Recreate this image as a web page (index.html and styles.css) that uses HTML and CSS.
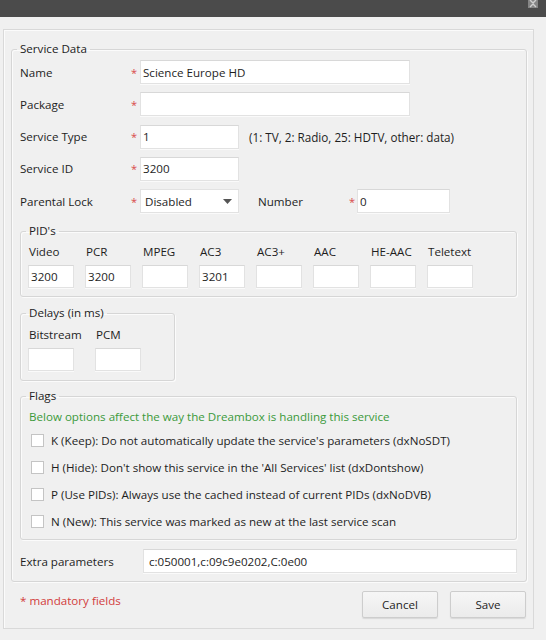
FILE: index.html
```html
<!DOCTYPE html>
<html lang="en">
<head>
    <meta charset="UTF-8">
    <title>Edit Service</title>
    <link rel="stylesheet" href="styles.css">
</head>
<body>
<div class="titlebar">
    <span class="close"><svg width="10" height="8" viewBox="0 0 10 8"><path d="M2 0l3 3 3-3M2 7l3-3 3 3" stroke="#cfcfcf" stroke-width="1.4" fill="none"/></svg></span>
</div>
<div class="window">
    <div class="frame">
        <fieldset class="group main">
            <legend>Service Data</legend>
            <div class="form">
                <div class="row">
                    <label class="lbl">Name</label><span class="req">*</span>
                    <input class="field w-long" value="Science Europe HD">
                </div>
                <div class="row">
                    <label class="lbl">Package</label><span class="req">*</span>
                    <input class="field w-long" value="">
                </div>
                <div class="row">
                    <label class="lbl">Service Type</label><span class="req">*</span>
                    <input class="field w-short" value="1">
                    <span class="hint">(1: TV, 2: Radio, 25: HDTV, other: data)</span>
                </div>
                <div class="row">
                    <label class="lbl">Service ID</label><span class="req">*</span>
                    <input class="field w-short" value="3200">
                </div>
                <div class="row">
                    <label class="lbl">Parental Lock</label><span class="req">*</span>
                    <div class="select w-short">
                        <span>Disabled</span>
                        <svg width="9" height="5" viewBox="0 0 9 5"><path d="M0 0h9L4.5 5z" fill="#555"/></svg>
                    </div>
                    <label class="lbl lbl-num">Number</label><span class="req req-num">*</span>
                    <input class="field w-num" value="0">
                </div>
            </div>

            <fieldset class="group pids">
                <legend>PID's</legend>
                <div class="cols">
                    <div class="col"><span>Video</span><input class="field box" value="3200"></div>
                    <div class="col"><span>PCR</span><input class="field box" value="3200"></div>
                    <div class="col"><span>MPEG</span><input class="field box" value=""></div>
                    <div class="col"><span>AC3</span><input class="field box" value="3201"></div>
                    <div class="col"><span>AC3+</span><input class="field box" value=""></div>
                    <div class="col"><span>AAC</span><input class="field box" value=""></div>
                    <div class="col"><span>HE-AAC</span><input class="field box" value=""></div>
                    <div class="col"><span>Teletext</span><input class="field box" value=""></div>
                </div>
            </fieldset>

            <fieldset class="group delays">
                <legend>Delays (in ms)</legend>
                <div class="cols cols-delay">
                    <div class="col"><span>Bitstream</span><input class="field box" value=""></div>
                    <div class="col"><span>PCM</span><input class="field box" value=""></div>
                </div>
            </fieldset>

            <fieldset class="group flags">
                <legend>Flags</legend>
                <div class="note">Below options affect the way the Dreambox is handling this service</div>
                <label class="flag"><input type="checkbox"> K (Keep): Do not automatically update the service's parameters (dxNoSDT)</label>
                <label class="flag"><input type="checkbox"> H (Hide): Don't show this service in the 'All Services' list (dxDontshow)</label>
                <label class="flag"><input type="checkbox"> P (Use PIDs): Always use the cached instead of current PIDs (dxNoDVB)</label>
                <label class="flag"><input type="checkbox"> N (New): This service was marked as new at the last service scan</label>
            </fieldset>

            <div class="row extra">
                <label class="lbl lbl-extra">Extra parameters</label>
                <input class="field w-extra" value="c:050001,c:09c9e0202,C:0e00">
            </div>
        </fieldset>

        <div class="footer">
            <span class="mandatory">* mandatory fields</span>
            <div class="buttons">
                <button class="btn">Cancel</button>
                <button class="btn">Save</button>
            </div>
        </div>
    </div>
</div>
</body>
</html>
```

FILE: styles.css
```css
* {
    box-sizing: border-box;
}
body {
    margin: 0;
    width: 546px;
    height: 640px;
    overflow: hidden;
    background: #f0f0f0;
    font-family: "Open Sans", "Noto Sans", sans-serif;
    font-size: 11.6px;
    color: #1e1e1e;
}
.titlebar {
    height: 17px;
    background: #4b4b4b;
    position: relative;
}
.close {
    position: absolute;
    right: 8px;
    top: 0;
    width: 10px;
    height: 8px;
    background: #858585;
    display: flex;
}
.window {
    padding: 12px 0 0 3px;
}
.frame {
    width: 531px;
    height: 600px;
    border: 1px solid #d9d9d9;
    box-shadow: inset 1px 1px 0 #fbfbfb;
    padding: 11px 6px 0 7px;
}

/* group boxes */
.group {
    margin: 0;
    min-width: 0;
    border: 1px solid #d6d6d6;
    border-radius: 3px;
    box-shadow: 1px 1px 0 #fbfbfb, inset 1px 1px 0 #fbfbfb;
    padding: 0 8px;
}
.group legend {
    padding: 0 3px;
    margin-left: -3px;
    line-height: 16px;
    color: #222;
}
.main {
    width: 516px;
    padding: 0 9px 8px 8px;
}
.form {
    padding-top: 3px;
    display: flex;
    flex-direction: column;
    gap: 8.25px;
}
.row {
    display: flex;
    align-items: center;
    height: 24px;
}
.lbl {
    width: 111px;
}
.req {
    width: 9px;
    color: #d94a4a;
    font-size: 11px;
}
.lbl-num {
    width: 91px;
    margin-left: 19px;
}
.req-num {
    width: 8px;
}
.field {
    height: 24px;
    border: 1px solid #e2e2e2;
    border-top-color: #d8d8d8;
    box-shadow: 0 1px 0 #fafafa;
    background: #fff;
    font: inherit;
    color: #1e1e1e;
    padding: 0 2px;
    outline: none;
}
.w-long {
    width: 270px;
}
.w-short {
    width: 99px;
}
.w-num {
    width: 93px;
}
.w-extra {
    width: 374px;
    margin-left: 2px;
    padding-left: 5px;
}
.hint {
    margin-left: 10px;
    font-size: 11.7px;
}
.select {
    height: 24px;
    display: flex;
    align-items: center;
    justify-content: space-between;
    padding: 0 6px 0 4px;
    background: #fff;
    border: 1px solid #e2e2e2;
    box-shadow: 0 1px 0 #fafafa;
}

/* PID's and delays */
.pids {
    margin-top: 10px;
    width: 497px;
    padding-bottom: 8px;
}
.cols {
    display: flex;
    gap: 11px;
}
.col {
    width: 46px;
    display: flex;
    flex-direction: column;
    gap: 5px;
}
.col span {
    margin-top: 5px;
    line-height: 16px;
    white-space: nowrap;
}
.col .box {
    width: 46px;
    height: 23px;
    margin-left: -1px;
}
.delays {
    margin-top: 8px;
    width: 155px;
    padding-bottom: 9px;
}
.cols-delay {
    gap: 21px;
}
.cols-delay .col span {
    margin-top: 6px;
}

/* flags */
.flags {
    margin-top: 7px;
    width: 497px;
    padding-bottom: 4px;
}
.note {
    margin-top: 5px;
    margin-bottom: 2px;
    line-height: 16px;
    color: #3b9a3b;
}
.flag {
    display: flex;
    align-items: center;
    height: 27px;
}
.flag input {
    appearance: none;
    width: 13px;
    height: 13px;
    margin: 0 7px 0 2px;
    border: 1px solid #c4c4c4;
    background: #fff;
}

.extra {
    margin-top: 9px;
}
.lbl-extra {
    width: 121px;
}

/* footer */
.footer {
    display: flex;
    justify-content: space-between;
    align-items: flex-start;
    padding: 9px 1px 0 9px;
}
.mandatory {
    color: #d23c3c;
    margin-top: 2px;
}
.buttons {
    display: flex;
    gap: 12px;
}
.btn {
    width: 76px;
    height: 27px;
    font: inherit;
    color: #1e1e1e;
    background: linear-gradient(#f6f6f6, #ebebeb);
    border: 1px solid #cdcdcd;
    border-radius: 2px;
    box-shadow: 0 1px 1px #d8d8d8;
}
```
